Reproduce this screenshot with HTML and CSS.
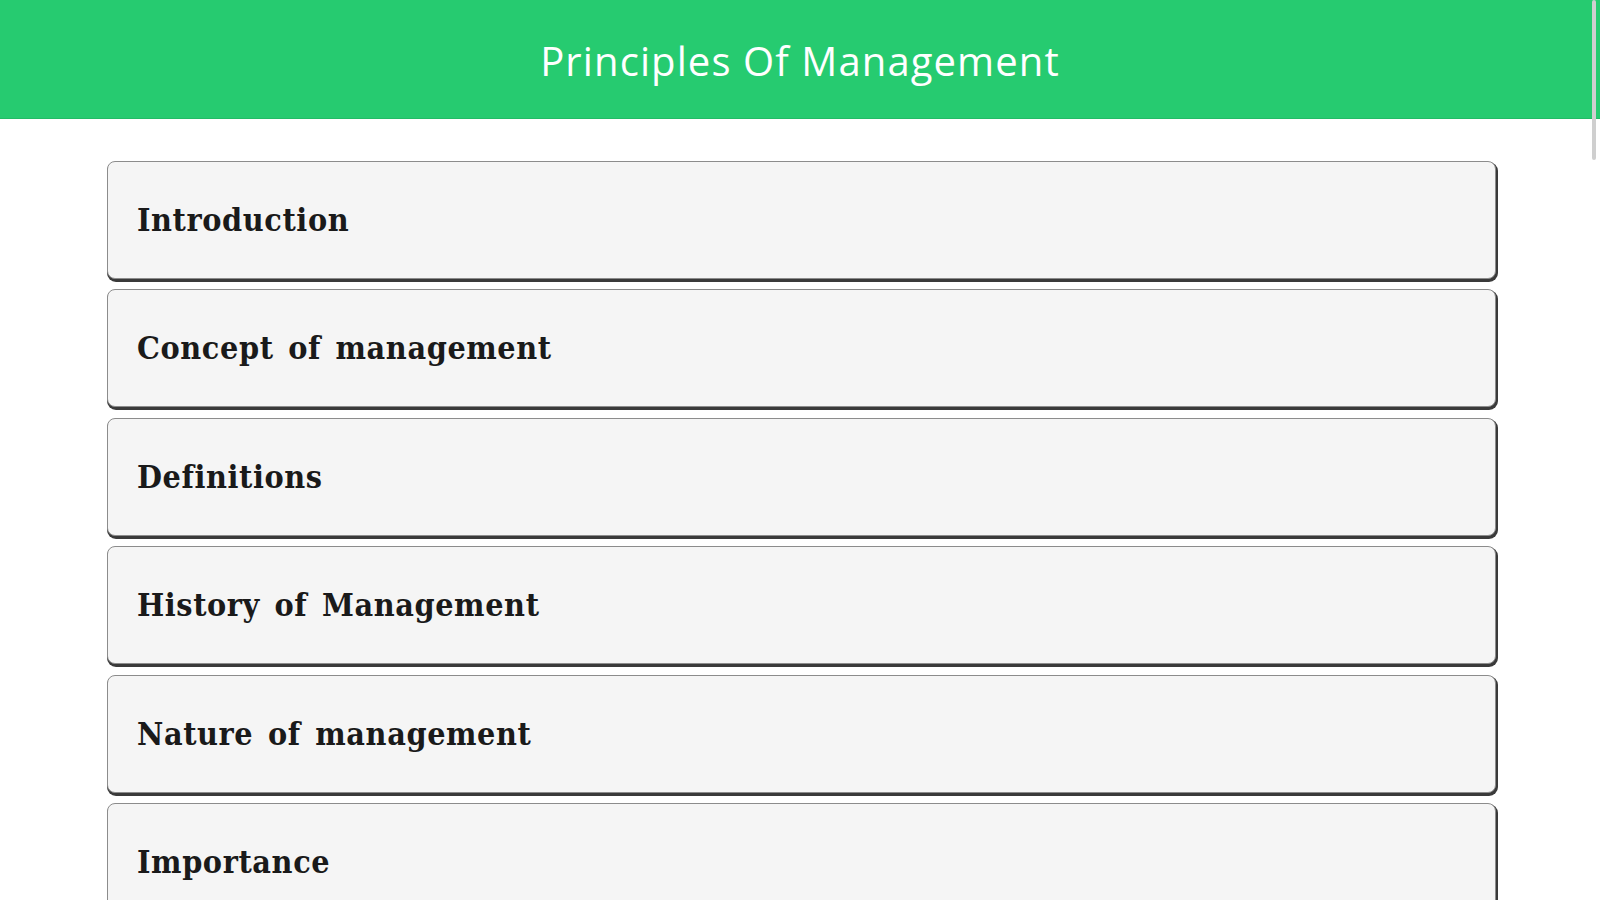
FILE: index.html
```html
<!DOCTYPE html>
<html>
<head>
<meta charset="utf-8">
<title>Principles Of Management</title>
<link rel="stylesheet" href="styles.css">
</head>
<body>
<header class="app-bar">
  <h1 class="app-title">Principles Of Management</h1>
</header>
<main class="topic-list">
  <div class="topic"><span class="topic-label">Introduction</span></div>
  <div class="topic"><span class="topic-label">Concept of management</span></div>
  <div class="topic"><span class="topic-label">Definitions</span></div>
  <div class="topic"><span class="topic-label">History of Management</span></div>
  <div class="topic"><span class="topic-label">Nature of management</span></div>
  <div class="topic"><span class="topic-label">Importance</span></div>
</main>
<div class="scrollbar"></div>
</body>
</html>
```

FILE: styles.css
```css
html, body {
  margin: 0;
  padding: 0;
  height: 900px;
  overflow: hidden;
  background: #ffffff;
}

.app-bar {
  height: 119px;
  background: #26cb70;
  border-bottom: 1px solid #22bb66;
  box-sizing: border-box;
  display: flex;
  align-items: center;
  justify-content: center;
}

.app-title {
  margin: 0;
  padding-top: 3px;
  font-family: "Open Sans", sans-serif;
  font-weight: 500;
  font-size: 40px;
  color: #ffffff;
  letter-spacing: 1.1px;
}

.topic-list {
  display: flex;
  flex-direction: column;
  gap: 10.4px;
  padding: 42px 0 0 107px;
  width: 1389px;
}

.topic {
  height: 118px;
  box-sizing: border-box;
  background: #f5f5f5;
  border: 1px solid #8c8c8c;
  border-radius: 8px;
  box-shadow: 1px 2px 0 1px #3a3a3a;
  display: flex;
  align-items: center;
  padding-left: 29px;
  flex-shrink: 0;
}

.topic-label {
  font-family: "DejaVu Serif", "Liberation Serif", serif;
  font-weight: bold;
  font-size: 32px;
  font-stretch: condensed;
  color: #1a1a1a;
  letter-spacing: 0.6px;
  word-spacing: 4px;
}

.scrollbar {
  position: absolute;
  top: 0;
  left: 1592px;
  width: 4px;
  height: 160px;
  border-radius: 2px;
  background: #cfcfcf;
}
```
